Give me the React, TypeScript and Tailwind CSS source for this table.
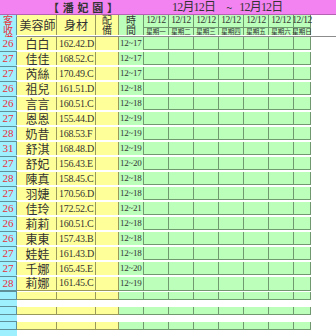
import React from 'react'

const rows = [
  ['26', '白白', '162.42.D', '12~17'],
  ['27', '佳佳', '168.52.C', '12~17'],
  ['27', '芮絲', '170.49.C', '12~17'],
  ['26', '祖兒', '161.51.D', '12~18'],
  ['26', '言言', '160.51.C', '12~18'],
  ['27', '恩恩', '155.44.D', '12~19'],
  ['28', '奶昔', '168.53.F', '12~19'],
  ['31', '舒淇', '168.48.D', '12~19'],
  ['27', '舒妃', '156.43.E', '12~20'],
  ['28', '陳真', '158.45.C', '12~18'],
  ['27', '羽婕', '170.56.D', '12~18'],
  ['26', '佳玲', '172.52.C', '12~21'],
  ['26', '莉莉', '160.51.C', '12~18'],
  ['26', '東東', '157.43.B', '12~18'],
  ['27', '娃娃', '161.43.D', '12~18'],
  ['27', '千娜', '165.45.E', '12~20'],
  ['28', '莉娜', '161.45.C', '12~19'],
  ['', '', '', ''],
  ['', '', '', ''],
  ['', '', '', ''],
]

const days = ['一', '二', '三', '四', '五', '六', '日']

const cjk = { fontFamily: '"Noto Sans CJK TC", "Noto Sans", sans-serif' }
const serif = { fontFamily: '"Liberation Serif", "Noto Sans CJK TC", serif' }

const cols = 'grid grid-cols-[17px_40px_39px_23px_25px_25px_25px_25px_25px_25px_25px_17px]'

export default function App() {
  return (
    <div className="w-[336px] h-[336px] overflow-hidden bg-white text-[#333]" style={cjk}>
      {/* title bar */}
      <div className="h-[15px] bg-[#f283f0] border-b border-black/25 flex items-center leading-none">
        <span className="ml-[48px] w-[70px] flex justify-between text-[11px] font-bold">
          <span>【</span><span>潘</span><span>妃</span><span>園</span><span>】</span>
        </span>
        <span className="ml-[54px] text-[12px] tracking-[-0.8px]" style={serif}>12月12日</span>
        <span className="ml-[11px] text-[11px]">~</span>
        <span className="ml-[7px] text-[12px] tracking-[-0.8px]" style={serif}>12月12日</span>
      </div>

      {/* header */}
      <div className={`${cols} h-[22px] border-b border-black/45`}>
        <div className="bg-[#9ef0ff] border-r border-black/40 flex flex-col items-center justify-center text-[10px] leading-[10px] text-[#e8303a]">
          <span>客</span><span>收</span>
        </div>
        <div className="bg-[#ffff99] border-r border-black/40 flex items-center justify-center text-[12px] pl-[2px]">美容師</div>
        <div className="bg-[#ffff99] border-r border-black/40 flex items-center justify-center text-[12px]">身材</div>
        <div className="bg-[#ffff99] border-r border-black/40 flex flex-col items-center justify-center text-[10px] leading-[10px]">
          <span>配</span><span>備</span>
        </div>
        <div className="bg-[#bbffbb] border-r border-black/40 flex flex-col items-center justify-center text-[10px] leading-[10px]">
          <span>時</span><span>間</span>
        </div>
        {days.map((d) => (
          <div key={d} className="bg-[#bbffbb] border-r border-black/40 flex flex-col">
            <div className="h-[13px] border-b border-black/40 flex items-center justify-center text-[9.5px] leading-none tracking-[-0.4px] whitespace-nowrap" style={serif}>
              12/12
            </div>
            <div className="flex-1 flex items-center justify-center text-[6.5px] leading-none whitespace-nowrap">星期{d}</div>
          </div>
        ))}
        <div className="bg-[#9ef0ff] flex flex-col items-center justify-center text-[10px] leading-[10px] text-[#e8303a]">
          <span>備</span><span>註</span>
        </div>
      </div>

      {/* body */}
      {rows.map((r, i) => {
        const lb = i >= 16 ? 'border-b border-black/40' : ''
        return (
          <div key={i} className={`${cols} h-[15px]`}>
            <div className={`bg-[#9ef0ff] border-r border-black/40 ${lb} flex items-center justify-center text-[11px] leading-none text-[#e8303a]`} style={serif}>
              {r[0]}
            </div>
            <div className={`bg-[#ffff99] border-r border-black/40 ${lb} flex items-center justify-center text-[12px] leading-none pl-[2px]`}>
              {r[1]}
            </div>
            <div className={`bg-[#ffff99] border-r border-black/40 ${lb} flex items-center pl-[2px] text-[10px] leading-none tracking-[-0.3px] whitespace-nowrap`} style={serif}>
              {r[2]}
            </div>
            <div className={`bg-[#ffff99] border-r border-black/40 ${lb}`} />
            <div className={`bg-[#bbffbb] border-r border-black/40 ${lb} flex items-center pl-[1px] text-[9px] leading-none tracking-[-0.3px] whitespace-nowrap`} style={serif}>
              {r[3]}
            </div>
            {days.map((d) => (
              <div key={d} className="bg-[#bbffbb] border-r border-b border-black/40" />
            ))}
            <div className="bg-[#9ef0ff] border-b border-black/40" />
          </div>
        )
      })}
    </div>
  )
}
